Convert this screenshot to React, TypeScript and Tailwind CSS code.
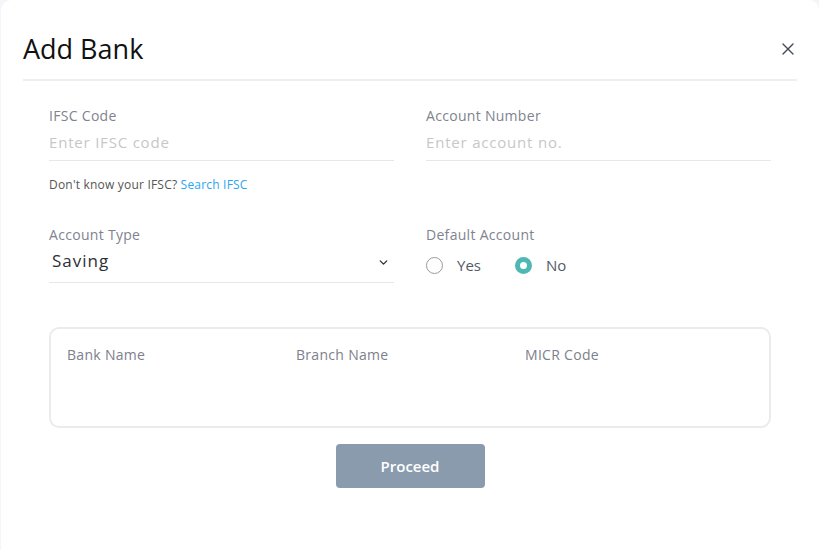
import { ChevronDown, X } from 'lucide-react';

type FieldProps = {
  label: string;
  placeholder: string;
};

const font = { fontFamily: '"Open Sans", "Liberation Sans", sans-serif' };

const TextField = ({ label, placeholder }: FieldProps) => (
  <div className="flex flex-col">
    <label className="text-[14px] leading-5 tracking-[0.3px] text-[#80838f]">{label}</label>
    <input
      placeholder={placeholder}
      className="mt-[2px] h-[33px] border-b border-[#e6e7ea] pb-[4px] text-[15px] tracking-[0.8px] text-[#333] outline-none placeholder:text-[#c6c7c9]"
    />
  </div>
);

const Radio = ({ label, checked }: { label: string; checked?: boolean }) => (
  <label className="flex items-center gap-[14px]">
    {checked ? (
      <span className="h-[17px] w-[17px] rounded-full border-[5px] border-[#4fb8b2] bg-white" />
    ) : (
      <span className="h-[17px] w-[17px] rounded-full border border-[#9a9a9a] bg-white" />
    )}
    <span className="text-[15px] text-[#555a66]">{label}</span>
  </label>
);

export default function App() {
  return (
    <div className="h-[550px] w-[819px] overflow-hidden bg-[#f3f5f8] pl-[1px]" style={font}>
      <div className="h-[560px] rounded-[10px] bg-white px-[22px]">
        <div className="flex items-center justify-between pt-[33px] pb-[14px]">
          <h2 className="text-[27px] leading-8 text-[#111]">Add Bank</h2>
          <X size={20} strokeWidth={1.6} className="-mr-[1px] text-[#444b55]" />
        </div>
        <div className="h-[2px] bg-[#eceef1]" />

        <div className="px-[26px] pt-[25px]">
          <div className="grid grid-cols-2 gap-x-[32px]">
            <TextField label="IFSC Code" placeholder="Enter IFSC code" />
            <TextField label="Account Number" placeholder="Enter account no." />
          </div>

          <p className="mt-[15px] text-[12px] tracking-[0.2px] text-[#555]">
            Don't know your IFSC? <a className="text-[#2ba6f2]">Search IFSC</a>
          </p>

          <div className="mt-[31px] grid grid-cols-2 gap-x-[32px]">
            <div className="flex flex-col">
              <label className="text-[14px] leading-5 tracking-[0.3px] text-[#80838f]">Account Type</label>
              <div className="mt-[4px] flex h-[34px] items-center justify-between border-b border-[#e6e7ea] pb-[9px] pl-[3px] pr-[4px]">
                <span className="text-[17px] tracking-[1px] text-[#2d2f36]">Saving</span>
                <ChevronDown size={13} strokeWidth={2.5} className="mt-[3px] text-[#333]" />
              </div>
            </div>
            <div className="flex flex-col">
              <label className="text-[14px] leading-5 tracking-[0.3px] text-[#80838f]">Default Account</label>
              <div className="mt-[9px] flex items-center gap-[34px]">
                <Radio label="Yes" />
                <Radio label="No" checked />
              </div>
            </div>
          </div>

          <div className="mt-[44px] grid h-[101px] grid-cols-[229px_229px_1fr] rounded-[10px] border-2 border-[#ebebeb] px-[16px] pt-[15px]">
            <span className="text-[14px] tracking-[0.3px] text-[#7d808c]">Bank Name</span>
            <span className="text-[14px] tracking-[0.3px] text-[#7d808c]">Branch Name</span>
            <span className="text-[14px] tracking-[0.3px] text-[#7d808c]">MICR Code</span>
          </div>

          <div className="mt-[16px] flex justify-center">
            <button className="h-[44px] w-[149px] rounded-[4px] bg-[#8a9bae] text-[15px] font-semibold text-white">
              Proceed
            </button>
          </div>
        </div>
      </div>
    </div>
  );
}
